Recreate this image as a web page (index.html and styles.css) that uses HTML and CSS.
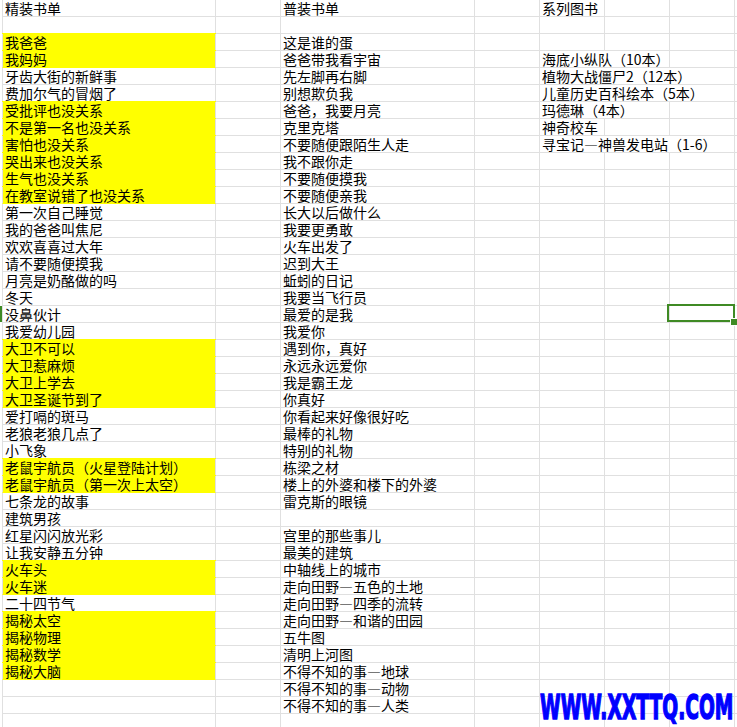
FILE: index.html
```html
<!DOCTYPE html>
<html lang="zh-CN">
<head>
<meta charset="utf-8">
<title>书单</title>
<link rel="stylesheet" href="styles.css">
</head>
<body>
<div class="sheet">
<div class="row"><i class="gut"></i><div class="cell ca">精装书单</div><div class="cell"></div><div class="cell">普装书单</div><div class="cell"></div><div class="cell">系列图书</div><div class="cell"></div><div class="cell"></div><div class="cell"></div></div>
<div class="row"><i class="gut"></i><div class="cell ca"></div><div class="cell"></div><div class="cell"></div><div class="cell"></div><div class="cell"></div><div class="cell"></div><div class="cell"></div><div class="cell"></div></div>
<div class="row"><i class="gut"></i><div class="cell ca fill">我爸爸</div><div class="cell"></div><div class="cell">这是谁的蛋</div><div class="cell"></div><div class="cell"></div><div class="cell"></div><div class="cell"></div><div class="cell"></div></div>
<div class="row"><i class="gut"></i><div class="cell ca fill">我妈妈</div><div class="cell"></div><div class="cell">爸爸带我看宇宙</div><div class="cell"></div><div class="cell span2">海底小纵队（10本）</div><div class="cell"></div><div class="cell"></div></div>
<div class="row"><i class="gut"></i><div class="cell ca">牙齿大街的新鲜事</div><div class="cell"></div><div class="cell">先左脚再右脚</div><div class="cell"></div><div class="cell span3">植物大战僵尸2（12本）</div><div class="cell"></div></div>
<div class="row"><i class="gut"></i><div class="cell ca">费加尔气的冒烟了</div><div class="cell"></div><div class="cell">别想欺负我</div><div class="cell"></div><div class="cell span3">儿童历史百科绘本（5本）</div><div class="cell"></div></div>
<div class="row"><i class="gut"></i><div class="cell ca fill">受批评也没关系</div><div class="cell"></div><div class="cell">爸爸，我要月亮</div><div class="cell"></div><div class="cell span2">玛德琳（4本）</div><div class="cell"></div><div class="cell"></div></div>
<div class="row"><i class="gut"></i><div class="cell ca fill">不是第一名也没关系</div><div class="cell"></div><div class="cell">克里克塔</div><div class="cell"></div><div class="cell">神奇校车</div><div class="cell"></div><div class="cell"></div><div class="cell"></div></div>
<div class="row"><i class="gut"></i><div class="cell ca fill">害怕也没关系</div><div class="cell"></div><div class="cell">不要随便跟陌生人走</div><div class="cell"></div><div class="cell span3">寻宝记—神兽发电站（1-6）</div><div class="cell"></div></div>
<div class="row"><i class="gut"></i><div class="cell ca fill">哭出来也没关系</div><div class="cell"></div><div class="cell">我不跟你走</div><div class="cell"></div><div class="cell"></div><div class="cell"></div><div class="cell"></div><div class="cell"></div></div>
<div class="row"><i class="gut"></i><div class="cell ca fill">生气也没关系</div><div class="cell"></div><div class="cell">不要随便摸我</div><div class="cell"></div><div class="cell"></div><div class="cell"></div><div class="cell"></div><div class="cell"></div></div>
<div class="row"><i class="gut"></i><div class="cell ca fill">在教室说错了也没关系</div><div class="cell"></div><div class="cell">不要随便亲我</div><div class="cell"></div><div class="cell"></div><div class="cell"></div><div class="cell"></div><div class="cell"></div></div>
<div class="row"><i class="gut"></i><div class="cell ca">第一次自己睡觉</div><div class="cell"></div><div class="cell">长大以后做什么</div><div class="cell"></div><div class="cell"></div><div class="cell"></div><div class="cell"></div><div class="cell"></div></div>
<div class="row"><i class="gut"></i><div class="cell ca">我的爸爸叫焦尼</div><div class="cell"></div><div class="cell">我要更勇敢</div><div class="cell"></div><div class="cell"></div><div class="cell"></div><div class="cell"></div><div class="cell"></div></div>
<div class="row"><i class="gut"></i><div class="cell ca">欢欢喜喜过大年</div><div class="cell"></div><div class="cell">火车出发了</div><div class="cell"></div><div class="cell"></div><div class="cell"></div><div class="cell"></div><div class="cell"></div></div>
<div class="row"><i class="gut"></i><div class="cell ca">请不要随便摸我</div><div class="cell"></div><div class="cell">迟到大王</div><div class="cell"></div><div class="cell"></div><div class="cell"></div><div class="cell"></div><div class="cell"></div></div>
<div class="row"><i class="gut"></i><div class="cell ca">月亮是奶酪做的吗</div><div class="cell"></div><div class="cell">蚯蚓的日记</div><div class="cell"></div><div class="cell"></div><div class="cell"></div><div class="cell"></div><div class="cell"></div></div>
<div class="row"><i class="gut"></i><div class="cell ca">冬天</div><div class="cell"></div><div class="cell">我要当飞行员</div><div class="cell"></div><div class="cell"></div><div class="cell"></div><div class="cell"></div><div class="cell"></div></div>
<div class="row"><i class="gut active"></i><div class="cell ca">没鼻伙计</div><div class="cell"></div><div class="cell">最爱的是我</div><div class="cell"></div><div class="cell"></div><div class="cell"></div><div class="cell current"><span class="selbox"></span><span class="handle"></span></div><div class="cell"></div></div>
<div class="row"><i class="gut"></i><div class="cell ca">我爱幼儿园</div><div class="cell"></div><div class="cell">我爱你</div><div class="cell"></div><div class="cell"></div><div class="cell"></div><div class="cell"></div><div class="cell"></div></div>
<div class="row"><i class="gut"></i><div class="cell ca fill">大卫不可以</div><div class="cell"></div><div class="cell">遇到你，真好</div><div class="cell"></div><div class="cell"></div><div class="cell"></div><div class="cell"></div><div class="cell"></div></div>
<div class="row"><i class="gut"></i><div class="cell ca fill">大卫惹麻烦</div><div class="cell"></div><div class="cell">永远永远爱你</div><div class="cell"></div><div class="cell"></div><div class="cell"></div><div class="cell"></div><div class="cell"></div></div>
<div class="row"><i class="gut"></i><div class="cell ca fill">大卫上学去</div><div class="cell"></div><div class="cell">我是霸王龙</div><div class="cell"></div><div class="cell"></div><div class="cell"></div><div class="cell"></div><div class="cell"></div></div>
<div class="row"><i class="gut"></i><div class="cell ca fill">大卫圣诞节到了</div><div class="cell"></div><div class="cell">你真好</div><div class="cell"></div><div class="cell"></div><div class="cell"></div><div class="cell"></div><div class="cell"></div></div>
<div class="row"><i class="gut"></i><div class="cell ca">爱打嗝的斑马</div><div class="cell"></div><div class="cell">你看起来好像很好吃</div><div class="cell"></div><div class="cell"></div><div class="cell"></div><div class="cell"></div><div class="cell"></div></div>
<div class="row"><i class="gut"></i><div class="cell ca">老狼老狼几点了</div><div class="cell"></div><div class="cell">最棒的礼物</div><div class="cell"></div><div class="cell"></div><div class="cell"></div><div class="cell"></div><div class="cell"></div></div>
<div class="row"><i class="gut"></i><div class="cell ca">小飞象</div><div class="cell"></div><div class="cell">特别的礼物</div><div class="cell"></div><div class="cell"></div><div class="cell"></div><div class="cell"></div><div class="cell"></div></div>
<div class="row"><i class="gut"></i><div class="cell ca fill">老鼠宇航员（火星登陆计划）</div><div class="cell"></div><div class="cell">栋梁之材</div><div class="cell"></div><div class="cell"></div><div class="cell"></div><div class="cell"></div><div class="cell"></div></div>
<div class="row"><i class="gut"></i><div class="cell ca fill">老鼠宇航员（第一次上太空）</div><div class="cell"></div><div class="cell">楼上的外婆和楼下的外婆</div><div class="cell"></div><div class="cell"></div><div class="cell"></div><div class="cell"></div><div class="cell"></div></div>
<div class="row"><i class="gut"></i><div class="cell ca">七条龙的故事</div><div class="cell"></div><div class="cell">雷克斯的眼镜</div><div class="cell"></div><div class="cell"></div><div class="cell"></div><div class="cell"></div><div class="cell"></div></div>
<div class="row"><i class="gut"></i><div class="cell ca">建筑男孩</div><div class="cell"></div><div class="cell"></div><div class="cell"></div><div class="cell"></div><div class="cell"></div><div class="cell"></div><div class="cell"></div></div>
<div class="row"><i class="gut"></i><div class="cell ca">红星闪闪放光彩</div><div class="cell"></div><div class="cell">宫里的那些事儿</div><div class="cell"></div><div class="cell"></div><div class="cell"></div><div class="cell"></div><div class="cell"></div></div>
<div class="row"><i class="gut"></i><div class="cell ca">让我安静五分钟</div><div class="cell"></div><div class="cell">最美的建筑</div><div class="cell"></div><div class="cell"></div><div class="cell"></div><div class="cell"></div><div class="cell"></div></div>
<div class="row"><i class="gut"></i><div class="cell ca fill">火车头</div><div class="cell"></div><div class="cell">中轴线上的城市</div><div class="cell"></div><div class="cell"></div><div class="cell"></div><div class="cell"></div><div class="cell"></div></div>
<div class="row"><i class="gut"></i><div class="cell ca fill">火车迷</div><div class="cell"></div><div class="cell">走向田野—五色的土地</div><div class="cell"></div><div class="cell"></div><div class="cell"></div><div class="cell"></div><div class="cell"></div></div>
<div class="row"><i class="gut"></i><div class="cell ca">二十四节气</div><div class="cell"></div><div class="cell">走向田野—四季的流转</div><div class="cell"></div><div class="cell"></div><div class="cell"></div><div class="cell"></div><div class="cell"></div></div>
<div class="row"><i class="gut"></i><div class="cell ca fill">揭秘太空</div><div class="cell"></div><div class="cell">走向田野—和谐的田园</div><div class="cell"></div><div class="cell"></div><div class="cell"></div><div class="cell"></div><div class="cell"></div></div>
<div class="row"><i class="gut"></i><div class="cell ca fill">揭秘物理</div><div class="cell"></div><div class="cell">五牛图</div><div class="cell"></div><div class="cell"></div><div class="cell"></div><div class="cell"></div><div class="cell"></div></div>
<div class="row"><i class="gut"></i><div class="cell ca fill">揭秘数学</div><div class="cell"></div><div class="cell">清明上河图</div><div class="cell"></div><div class="cell"></div><div class="cell"></div><div class="cell"></div><div class="cell"></div></div>
<div class="row"><i class="gut"></i><div class="cell ca fill">揭秘大脑</div><div class="cell"></div><div class="cell">不得不知的事—地球</div><div class="cell"></div><div class="cell"></div><div class="cell"></div><div class="cell"></div><div class="cell"></div></div>
<div class="row"><i class="gut"></i><div class="cell ca"></div><div class="cell"></div><div class="cell">不得不知的事—动物</div><div class="cell"></div><div class="cell"></div><div class="cell"></div><div class="cell"></div><div class="cell"></div></div>
<div class="row"><i class="gut"></i><div class="cell ca"></div><div class="cell"></div><div class="cell">不得不知的事—人类</div><div class="cell"></div><div class="cell"></div><div class="cell"></div><div class="cell"></div><div class="cell"></div></div>
<div class="row"><i class="gut"></i><div class="cell ca"></div><div class="cell"></div><div class="cell"></div><div class="cell"></div><div class="cell"></div><div class="cell"></div><div class="cell"></div><div class="cell"></div></div>
<div class="watermark">WWW.XXTTQ.COM</div>
</div>
</body>
</html>
```

FILE: styles.css
```css
html, body {
  margin: 0;
  padding: 0;
  background: #fff;
  overflow: hidden;
}

.sheet {
  position: relative;
  font-family: "Noto Sans CJK SC", "Noto Sans", sans-serif;
  font-size: 14px;
  color: #000;
}

.row {
  display: grid;
  grid-template-columns: 2px 214px 65px 194px 65px 65px 65px 65px 1fr;
  height: 17px;
}

.gut {
  display: block;
}

.gut.active {
  background: #3f8a24;
  margin-bottom: 1px;
}

.cell {
  box-sizing: border-box;
  height: 17px;
  border-right: 1px solid #e0e0e0;
  border-bottom: 1px solid #e0e0e0;
  padding: 0 2px;
  line-height: 16px;
  white-space: nowrap;
  overflow: visible;
}

.cell.ca {
  border-left: 1px solid #e0e0e0;
}

.cell.fill {
  background: #ffff00;
  border-bottom-color: #ffff00;
  box-shadow: 0 -1px 0 #ffff00;
}

.span2 {
  grid-column: span 2;
}

.span3 {
  grid-column: span 3;
}

.cell.current {
  position: relative;
}

.selbox {
  position: absolute;
  left: -3px;
  top: -2px;
  width: 68px;
  height: 18px;
  box-sizing: border-box;
  border: 2px solid #3f8a24;
}

.handle {
  position: absolute;
  left: 60px;
  top: 12px;
  width: 6px;
  height: 6px;
  background: #3f8a24;
  border: 1px solid #fff;
}

.watermark {
  position: absolute;
  left: 540px;
  top: 690px;
  font-family: "DejaVu Sans", sans-serif;
  font-weight: bold;
  font-size: 34px;
  line-height: 34px;
  color: #0000ff;
  -webkit-text-stroke: 1.5px #0000ff;
  transform: scaleX(0.55);
  transform-origin: left top;
  white-space: nowrap;
}
```
